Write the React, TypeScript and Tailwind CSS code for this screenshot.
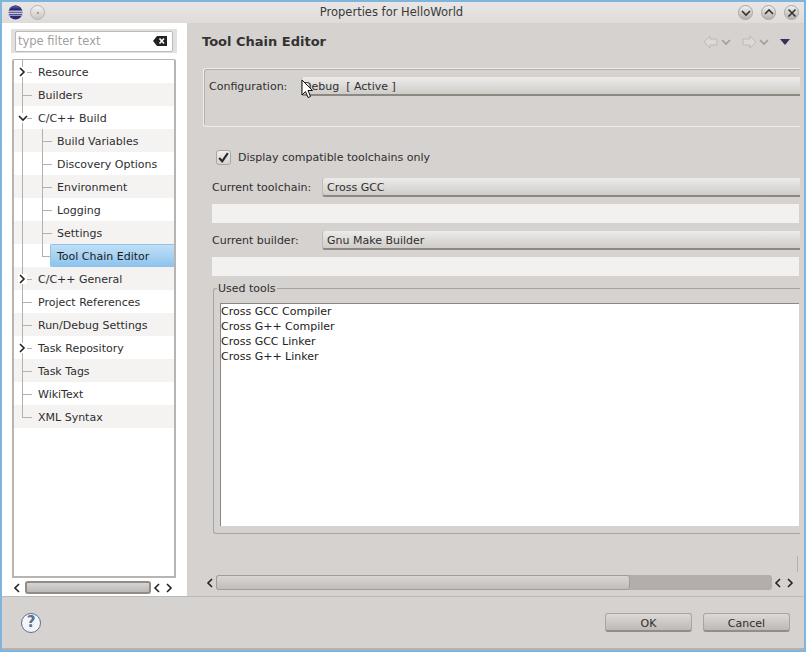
const TREE = [
  { label: 'Resource', level: 0, arrow: 'right' },
  { label: 'Builders', level: 0 },
  { label: 'C/C++ Build', level: 0, arrow: 'down' },
  { label: 'Build Variables', level: 1 },
  { label: 'Discovery Options', level: 1 },
  { label: 'Environment', level: 1 },
  { label: 'Logging', level: 1 },
  { label: 'Settings', level: 1 },
  { label: 'Tool Chain Editor', level: 1, selected: true },
  { label: 'C/C++ General', level: 0, arrow: 'right' },
  { label: 'Project References', level: 0 },
  { label: 'Run/Debug Settings', level: 0 },
  { label: 'Task Repository', level: 0, arrow: 'right' },
  { label: 'Task Tags', level: 0 },
  { label: 'WikiText', level: 0 },
  { label: 'XML Syntax', level: 0, last: true },
]

function Chevron({ dir, className = '' }: { dir: 'left' | 'right' | 'up' | 'down'; className?: string }) {
  const points = {
    left: '6,1 2,5 6,9',
    right: '2,1 6,5 2,9',
    up: '1,6 5,2 9,6',
    down: '1,3 5,7 9,3',
  }[dir]
  return (
    <svg viewBox="0 0 10 10" className={`w-[10px] h-[10px] ${className}`} fill="none" stroke="currentColor" strokeWidth="1.6">
      <polyline points={points} />
    </svg>
  )
}

function TreeRow({ item, index }: { item: (typeof TREE)[number]; index: number }) {
  return (
    <div className={`relative h-[23px] flex items-center pt-[4px] ${index % 2 === 1 ? 'bg-[#f5f3f2]' : 'bg-white'}`}>
      {/* tree connectors */}
      <div className={`absolute left-[8px] top-0 w-px bg-[#b4b0ad] ${item.last ? 'h-[13px]' : 'h-[23px]'}`} />
      {item.level === 0 && <div className={`absolute top-[12px] h-px bg-[#b4b0ad] ${item.arrow ? 'left-[13px] w-[5px]' : 'left-[8px] w-[10px]'}`} />}
      {item.level === 1 && (
        <>
          <div className={`absolute left-[28px] top-0 w-px bg-[#b4b0ad] ${item.selected ? 'h-[13px]' : 'h-[23px]'}`} />
          <div className="absolute left-[28px] top-[12px] h-px w-[10px] bg-[#b4b0ad]" />
        </>
      )}
      {item.arrow && (
        <div className="absolute left-[4px] top-[7px] w-[9px] h-[10px] bg-white text-[#222]">
          <Chevron dir={item.arrow === 'right' ? 'right' : 'down'} className="w-[9px] h-[9px]" />
        </div>
      )}
      {item.selected ? (
        <div className="absolute left-[36px] right-0 top-0 h-[23px] pl-[6px] pt-[4px] flex items-center rounded-l-[2px] border border-r-0 border-[#8fc3ea] bg-gradient-to-b from-[#c0dff6] to-[#8ec4ee] text-[#1c1c1c]">
          {item.label}
        </div>
      ) : (
        <span className={item.level === 1 ? 'ml-[43px] text-[#2e2e2e]' : 'ml-[24px] text-[#2e2e2e]'}>{item.label}</span>
      )}
    </div>
  )
}

function ScrollArrows({ className = '' }: { className?: string }) {
  return (
    <div className={`flex gap-[2px] text-[#222] ${className}`}>
      <Chevron dir="left" />
      <Chevron dir="right" />
    </div>
  )
}

function Combo({ text, className = '' }: { text: string; className?: string }) {
  return (
    <div className={`h-[19px] flex-1 flex items-center pt-[4px] rounded-l-[3px] border-b-2 border-b-[#8c8884] border-l border-l-[#bdb9b6] bg-gradient-to-b from-[#edecea] to-[#cfccc9] text-[#2e2e2e] ${className}`}>
      {text}
    </div>
  )
}

function WinButton({ children }: { children: React.ReactNode }) {
  return (
    <div className="w-[15px] h-[15px] rounded-full border border-[#a8a5a2] bg-gradient-to-b from-[#f2f1f0] to-[#b5b2af] flex items-center justify-center text-[#333]">
      {children}
    </div>
  )
}

function NavArrow({ dir }: { dir: 'left' | 'right' }) {
  return (
    <svg viewBox="0 0 16 14" className="w-[16px] h-[14px]" fill="#dcd9d7" stroke="#bdbab7">
      <path d={dir === 'left' ? 'M1 7 L7 1 V4 H14 V10 H7 V13 Z' : 'M15 7 L9 1 V4 H2 V10 H9 V13 Z'} />
    </svg>
  )
}

export default function App() {
  return (
    <div className="relative w-[806px] h-[652px] overflow-hidden flex flex-col bg-[#d6d2d0] border-x-2 border-y-2 border-[#7fb4dc] text-[11px] text-[#2e2e2e] font-['DejaVu_Sans',sans-serif]">
      {/* Title bar */}
      <div className="h-[21px] shrink-0 flex items-center bg-gradient-to-b from-[#e9e7e6] to-[#dedbd9] pl-[6px] pr-[3px]">
        <svg viewBox="0 0 16 16" className="w-[15px] h-[15px]">
          <circle cx="8" cy="8" r="7.5" fill="#2c2a6e" />
          <rect x="0" y="6" width="16" height="1.2" fill="#e8e8f4" />
          <rect x="0" y="8.2" width="16" height="1.2" fill="#e8e8f4" />
          <rect x="0" y="10.4" width="16" height="1" fill="#c7c7e4" />
          <path d="M2 3.5 A7.5 7.5 0 0 1 14 3.5 Z" fill="#4a4796" />
        </svg>
        <div className="ml-[7px] w-[15px] h-[15px] rounded-full border border-[#b5b2af] bg-gradient-to-b from-[#f4f3f2] to-[#c9c6c3] flex items-center justify-center">
          <div className="w-[2px] h-[2px] rounded-full bg-[#888]" />
        </div>
        <div className="flex-1 text-center text-[11.5px] text-[#3a3a3a]">Properties for HelloWorld</div>
        <div className="flex gap-[8px] mr-[2px]">
          <WinButton><Chevron dir="down" /></WinButton>
          <WinButton><Chevron dir="up" /></WinButton>
          <WinButton>
            <svg viewBox="0 0 10 10" className="w-[10px] h-[10px]" fill="none" stroke="currentColor" strokeWidth="1.6">
              <path d="M1.5 1.5 L8.5 8.5 M8.5 1.5 L1.5 8.5" />
            </svg>
          </WinButton>
        </div>
      </div>

      <div className="flex h-[573px] shrink-0">
        {/* Left: filter + tree */}
        <div className="w-[185px] shrink-0 bg-white flex flex-col pl-[10px] pr-[11px] pt-[6px]">
          <div className="h-[24px] -mx-[1px] bg-[#e3e1df] px-[4px] flex items-center">
            <div className="h-[21px] w-full rounded-[2px] border border-[#bdb9b6] bg-white flex items-center pl-[2px] pr-[4px]">
              <span className="flex-1 text-[#a3a09e] text-[11.5px] pt-[2px]">type filter text</span>
              <svg viewBox="0 0 15 12" className="w-[15px] h-[12px]">
                <path d="M0 6 L4 1 H14 V11 H4 Z" fill="#222" />
                <path d="M6.5 3.5 L11 8.5 M11 3.5 L6.5 8.5" stroke="#fff" strokeWidth="1.6" />
              </svg>
            </div>
          </div>
          <div className="mt-[6px] h-[519px] rounded-t-[2px] border-2 border-t border-[#b8b4b1] flex flex-col bg-white">
            <div className="flex flex-col">
              {TREE.map((item, i) => (
                <TreeRow key={item.label} item={item} index={i} />
              ))}
            </div>
          </div>
          <div className="mt-[2px] h-[15px] flex items-center text-[#222]">
            <Chevron dir="left" className="ml-[1px]" />
            <div className="ml-[2px] w-[126px] h-[13px] rounded-[3px] border-2 border-[#8f8c89] bg-gradient-to-b from-[#d6d3d1] to-[#bcb9b6]" />
            <ScrollArrows className="ml-[2px]" />
          </div>
        </div>

        {/* Right: property page */}
        <div className="flex-1 min-w-0 flex flex-col pl-[13px] pr-[4px] relative">
          <div className="h-[36px] shrink-0 flex items-center pl-[2px] pt-[1px] pr-[10px]">
            <span className="flex-1 text-[13px] font-bold text-[#333]">Tool Chain Editor</span>
            <div className="flex items-center text-[#a09d9a] mt-[1px]">
              <NavArrow dir="left" />
              <Chevron dir="down" className="ml-[2px]" />
              <div className="w-[10px]" />
              <NavArrow dir="right" />
              <Chevron dir="down" className="ml-[2px]" />
              <svg viewBox="0 0 10 6" className="w-[10px] h-[6px] ml-[11px]">
                <path d="M0 0 H10 L5 6 Z" fill="#37305c" />
              </svg>
            </div>
          </div>

          {/* Configuration group */}
          <div className="mt-[9px] h-[59px] shrink-0 ml-[3px] rounded-l-[3px] border border-r-0 border-[#efedec] shadow-[inset_1px_1px_0_#b4b0ad] pl-[5px] pt-[8px] flex items-start">
            <span className="w-[92px] h-[19px] pt-[1px] flex items-center shrink-0">Configuration:</span>
            <Combo text="Debug  [ Active ]" className="pl-[1px] whitespace-pre" />
          </div>

          {/* Compatible check */}
          <div className="mt-[23px] h-[15px] flex items-center ml-[16px] shrink-0">
            <div className="w-[15px] h-[15px] rounded-[3px] border border-[#a8a5a2] bg-gradient-to-b from-[#f0efee] to-[#d5d2d0] flex items-center justify-center">
              <svg viewBox="0 0 12 12" className="w-[13px] h-[13px]" fill="none" stroke="#2a2a2a" strokeWidth="2">
                <path d="M2 6.5 L4.8 9.5 L10 2" />
              </svg>
            </div>
            <span className="ml-[7px] pt-[1px]">Display compatible toolchains only</span>
          </div>

          {/* Toolchain */}
          <div className="mt-[13px] h-[19px] flex items-center ml-[12px] shrink-0">
            <span className="w-[110px] shrink-0 pt-[1px]">Current toolchain:</span>
            <Combo text="Cross GCC" className="pl-[4px]" />
          </div>
          <div className="mt-[7px] h-[19px] ml-[12px] mr-[1px] shrink-0 bg-[#f2f1f0]" />

          {/* Builder */}
          <div className="mt-[8px] h-[19px] flex items-center ml-[12px] shrink-0">
            <span className="w-[110px] shrink-0 pt-[1px]">Current builder:</span>
            <Combo text="Gnu Make Builder" className="pl-[4px]" />
          </div>
          <div className="mt-[7px] h-[19px] ml-[12px] mr-[1px] shrink-0 bg-[#f2f1f0]" />

          {/* Used tools */}
          <div className="relative mt-[12px] h-[246px] ml-[13px] shrink-0 rounded-l-[3px] border-l border-t border-b border-[#a8a4a1] pl-[6px] pt-[14px] flex flex-col">
            <span className="absolute left-[3px] -top-[7px] leading-[13px] px-[1px] bg-[#d6d2d0]">Used tools</span>
            <div className="h-[223px] mr-[1px] border-l border-t border-[#8a8683] bg-white leading-[15px] text-[#222]">
              <div>Cross GCC Compiler</div>
              <div>Cross G++ Compiler</div>
              <div>Cross GCC Linker</div>
              <div>Cross G++ Linker</div>
            </div>
          </div>

          {/* Horizontal scrollbar */}
          <div className="mt-[41px] h-[15px] flex items-center shrink-0 text-[#222] ml-[6px]">
            <Chevron dir="left" />
            <div className="w-[556px] h-[15px] rounded-[3px] bg-[#b3aeab] flex">
              <div className="w-[414px] h-[15px] rounded-[3px] border border-[#a09c99] bg-gradient-to-b from-[#d8d5d3] to-[#c0bdba]" />
            </div>
            <ScrollArrows className="ml-[2px]" />
          </div>
          <div className="absolute right-[6px] top-[533px] w-px h-[16px] bg-[#b4b0ad]" />
        </div>
      </div>

      {/* Bottom bar */}
      <div className="flex-1 border-t border-[#bdb9b6] flex items-center pl-[19px] pr-[14px] border-b-[2px] border-b-[#b5b2af]">
        <div className="w-[20px] h-[20px] rounded-full border-[1.5px] border-[#5a6f96] bg-[#f4f5f8] flex items-center justify-center text-[#5a6f96] text-[15px] font-bold leading-none">?</div>
        <div className="flex-1" />
        <button className="w-[87px] h-[19px] pt-[2px] rounded-[3px] border border-[#a8a5a2] border-b-2 border-b-[#918d8a] bg-gradient-to-b from-[#dcd9d7] to-[#bcb9b6] text-[#2e2e2e]">OK</button>
        <button className="ml-[11px] w-[87px] h-[19px] pt-[2px] rounded-[3px] border border-[#a8a5a2] border-b-2 border-b-[#918d8a] bg-gradient-to-b from-[#dcd9d7] to-[#bcb9b6] text-[#2e2e2e]">Cancel</button>
      </div>

      {/* Mouse pointer caught in the screenshot */}
      <svg viewBox="0 0 12 20" className="absolute left-[299px] top-[77px] w-[12px] h-[20px]">
        <path d="M1 1 V16 L4.5 12.5 L7 18.5 L9.5 17.5 L7 11.5 H11.5 Z" fill="#fff" stroke="#111" strokeWidth="1" />
      </svg>
    </div>
  )
}
